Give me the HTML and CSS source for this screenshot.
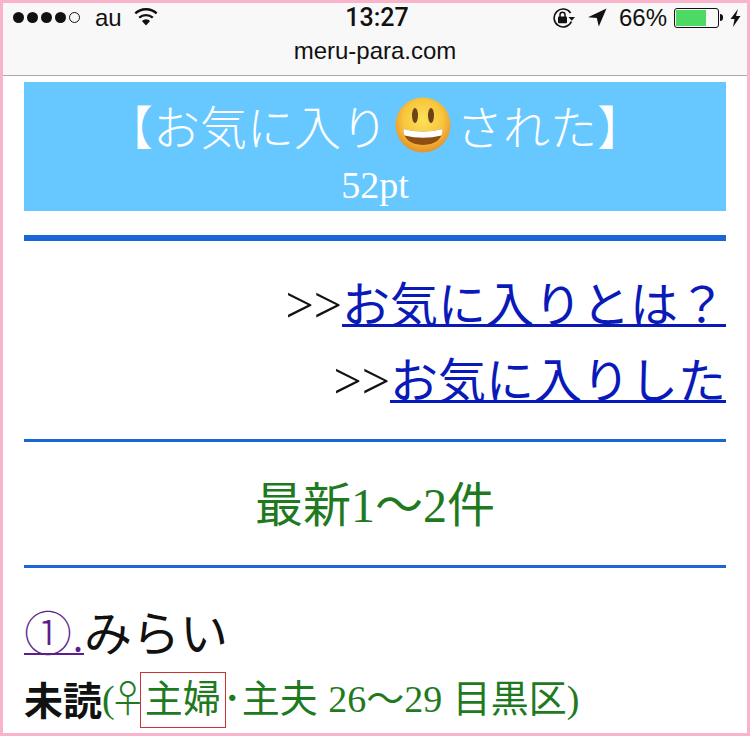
FILE: index.html
```html
<!DOCTYPE html>
<html lang="ja">
<head>
<meta charset="utf-8">
<title>meru-para.com</title>
<link rel="stylesheet" href="styles.css">
</head>
<body>
<div class="frame">
  <header class="chrome">
    <div class="status">
      <div class="status-left">
        <span class="signal"><i></i><i></i><i></i><i></i><i class="off"></i></span>
        <span class="carrier">au</span>
        <svg class="wifi" width="24" height="18" viewBox="0 0 24 18"><path d="M12 17.500 7.900 12.900a6.200 6.200 0 0 1 8.200 0Z" fill="#111"/><path d="M5.200 9.700a10.300 10.300 0 0 1 13.600 0" fill="none" stroke="#111" stroke-width="2.400"/><path d="M1.300 5.300a16 16 0 0 1 21.400 0" fill="none" stroke="#111" stroke-width="2.400"/></svg>
      </div>
      <div class="time">13:27</div>
      <div class="status-right">
        <svg class="lock" width="25" height="20" viewBox="0 0 25 20"><path d="M20.400 13.500A9 9 0 1 1 19.600 5" fill="none" stroke="#111" stroke-width="1.600"/><path d="M17.500 9h6.500l-3.200 3.800Z" fill="#111"/><rect x="7" y="8.500" width="9" height="6.800" rx="1" fill="#111"/><path d="M9 9V6.800a2.500 2.500 0 0 1 5 0V9" fill="none" stroke="#111" stroke-width="1.500"/></svg>
        <svg class="arrow" width="20" height="19" viewBox="0 0 20 19"><path d="M19.500.5 1 9.200l8.800.8 2 8.500Z" fill="#111"/></svg>
        <span class="pct">66%</span>
        <span class="battery"><span class="battery-fill"></span></span>
        <span class="battery-tip"></span>
        <svg class="bolt" width="11" height="18" viewBox="0 0 11 18"><path d="M8 0 .5 10h4L3 18l7.500-11H6Z" fill="#111"/></svg>
      </div>
    </div>
    <div class="url">meru-para.com</div>
  </header>
  <main class="page">
    <section class="banner">
      <div class="banner-title">
        <span>【お気に入り</span>
        <svg class="emoji" width="56" height="56" viewBox="0 0 56 56">
          <defs>
            <radialGradient id="face" cx="50%" cy="40%" r="58%">
              <stop offset="0" stop-color="#fce15a"/>
              <stop offset=".62" stop-color="#f8c63c"/>
              <stop offset="1" stop-color="#e6952c"/>
            </radialGradient>
          </defs>
          <circle cx="28" cy="28" r="27.500" fill="url(#face)"/>
          <ellipse cx="20" cy="18.500" rx="3" ry="7.500" fill="#6b4316"/>
          <ellipse cx="36" cy="18.500" rx="3" ry="7.500" fill="#6b4316"/>
          <path d="M8.500 32Q28 37 47.500 32q0 15-19.500 16Q8.500 47 8.500 32Z" fill="#8f4f12"/>
          <path d="M8.500 32Q28 37 47.500 32q.4 3.500-1 6.500Q28 43 9.500 38.500 8 35.500 8.500 32Z" fill="#fff"/>
        </svg>
        <span>された】</span>
      </div>
      <div class="banner-pt">52pt</div>
    </section>
    <hr class="rule rule-thick">
    <nav class="links">
      <p class="link-row"><span class="gt">&gt;&gt;</span><a href="#">お気に入りとは？</a></p>
      <p class="link-row"><span class="gt">&gt;&gt;</span><a href="#">お気に入りした</a></p>
    </nav>
    <hr class="rule">
    <h2 class="latest">最新1〜2件</h2>
    <hr class="rule">
    <div class="entry-name"><a href="#">①.</a>みらい</div>
    <div class="entry-meta"><b>未読</b><span class="meta">(<span class="female">♀</span><span class="tag">主婦</span><span class="dot">･</span>主夫 26〜29 目黒区)</span></div>
  </main>
</div>
</body>
</html>
```
FILE: styles.css
```css
* { box-sizing: border-box; }
html, body { margin: 0; padding: 0; }
body { width: 750px; height: 736px; overflow: hidden; background: #fff; font-family: "Liberation Serif", "Noto Sans CJK JP", serif; color: #111; }
.frame { width: 750px; height: 736px; border: 3px solid #fbb3cb; overflow: hidden; }
.chrome { height: 73px; background: #f8f8f8; border-bottom: 1px solid #aaa; font-family: "Liberation Sans", Arial, sans-serif; }
.status { display: grid; grid-template-columns: 1fr auto 1fr; align-items: center; height: 24px; padding: 0 6px 0 10px; }
.status-left { display: flex; align-items: center; }
.signal { display: flex; gap: 3px; }
.signal i { width: 11px; height: 11px; border-radius: 50%; background: #111; }
.signal i.off { background: none; border: 1px solid #111; }
.carrier { margin-left: 15px; font-size: 24px; }
.wifi { margin-left: 12px; margin-top: -2px; }
.time { font-size: 25px; font-family: Roboto, sans-serif; font-weight: 500; }
.status-right { display: flex; align-items: center; justify-content: flex-end; }
.lock { margin-right: 11px; }
.arrow { margin-right: 12px; }
.pct { font-size: 24px; margin-right: 7px; }
.battery { width: 45px; height: 20px; border: 1px solid #111; border-radius: 3px; padding: 1px; display: flex; }
.battery-fill { width: 30px; background: #4cd964; }
.battery-tip { width: 3px; height: 7px; background: #111; border-radius: 0 3px 3px 0; margin-left: 1px; margin-right: 7px; }
.url { text-align: center; font-size: 24px; line-height: 24px; margin-top: 12px; }
.page { padding: 6px 21px 0; }
.banner { height: 129px; background: #66c8ff; color: #fff; text-align: center; }
.banner-title { display: flex; justify-content: center; align-items: center; height: 84px; font-family: "Noto Sans CJK JP", sans-serif; font-weight: 300; font-size: 47px; }
.emoji { margin: 2px 5px 0 7px; flex: none; }
.banner-pt { font-size: 38px; line-height: 38px; }
.rule { border: 0; margin: 0; height: 3px; background: #1a66d6; }
.rule-thick { height: 6px; margin-top: 24px; }
.links { height: 198px; padding-top: 27px; }
.link-row { margin: 0 0 10px; height: 66px; text-align: right; font-size: 48px; line-height: 66px; }
.gt { font-size: 50px; }
.link-row a { color: #0a1ab8; font-family: "Noto Sans CJK JP", sans-serif; font-size: 48px; font-weight: 400; text-decoration-thickness: 3px; text-underline-offset: 2px; }
.latest { margin: 0; height: 123px; line-height: 127px; text-align: center; font-size: 48px; font-weight: 400; color: #1f7a1f; }
.entry-name { margin-top: 30px; height: 56px; line-height: 64px; font-size: 48px; font-family: "Noto Sans CJK JP", sans-serif; font-weight: 400; }
.entry-name a { color: #5a1f8c; font-weight: 300; text-decoration-thickness: 2px; text-underline-offset: 2px; }
.entry-meta { margin-top: 14px; display: flex; align-items: center; font-size: 38px; line-height: 56px; word-spacing: 1px; }
.entry-meta b { font-family: "Noto Sans CJK JP", sans-serif; font-size: 39px; font-weight: 700; }
.meta { color: #1f7a1f; }
.female { font-family: "Noto Sans CJK JP", sans-serif; font-weight: 300; margin: 0 -7px 0 -6px; }
.tag { display: inline-block; height: 56px; line-height: 52px; border: 1px solid #c33; padding: 0 4px; }
.dot { margin: 0 0 0 -3px; }
```
